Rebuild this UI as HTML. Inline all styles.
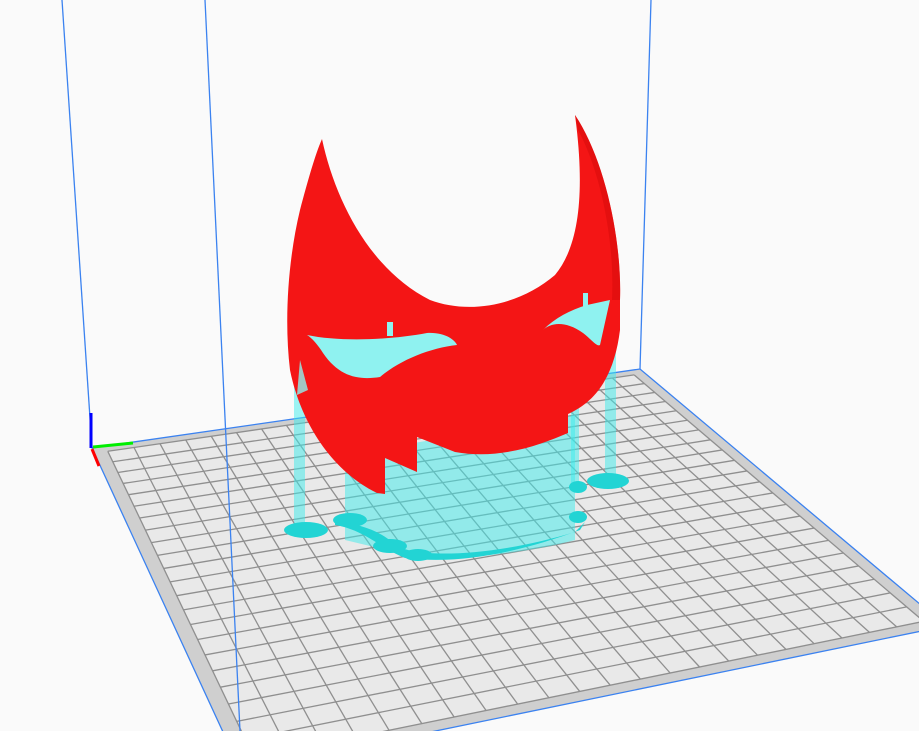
<!DOCTYPE html>
<html><head><meta charset="utf-8"><style>
html,body{margin:0;padding:0;background:#fafafa;overflow:hidden;width:919px;height:731px}
svg{display:block}
</style></head><body>
<svg id="s" width="919" height="731" viewBox="0 0 919 731" xmlns="http://www.w3.org/2000/svg">
<rect width="919" height="731" fill="#fafafa"/>
<g id="plate"></g>
<line x1="62" y1="0" x2="92" y2="448" stroke="#3b82f0" stroke-width="1.3"/>
<line x1="651" y1="0" x2="640" y2="369" stroke="#3b82f0" stroke-width="1.3"/>
<line x1="91" y1="413" x2="91" y2="448" stroke="#0000ff" stroke-width="3"/>
<line x1="93" y1="447" x2="133" y2="443" stroke="#00ee00" stroke-width="3"/>
<line x1="92" y1="449" x2="99" y2="466" stroke="#ff0000" stroke-width="3"/>
<g fill="rgba(60,235,235,0.5)">
<path d="M345,455 L575,415 L575,540 C540,550 470,560 420,558 L345,540 Z"/>
<rect x="294" y="345" width="11" height="185"/>
<rect x="605" y="300" width="11" height="180"/>
<rect x="571" y="390" width="8" height="95"/>
<path d="M305,330 L455,335 L430,360 L380,385 L320,360 Z"/>
<path d="M540,325 L612,290 L610,360 L590,350 Z"/>
</g>
<g fill="#22d4d4">
<ellipse cx="306" cy="530" rx="22" ry="8"/>
<ellipse cx="608" cy="481" rx="21" ry="8"/>
<ellipse cx="578" cy="487" rx="9" ry="6"/>
<ellipse cx="350" cy="520" rx="17" ry="7"/>
<ellipse cx="578" cy="517" rx="9" ry="6"/>
<ellipse cx="390" cy="546" rx="17" ry="7"/>
<ellipse cx="418" cy="555" rx="14" ry="6"/>
<path d="M335,520 C360,525 380,530 395,545 C420,560 500,555 575,532 L585,522 L580,530 C520,552 460,565 405,558 C380,548 365,530 335,525 Z"/>
</g>
<path fill="#f41515" d="M322,139 C335,200 370,270 430,300 C470,315 520,305 555,275 C580,245 585,190 575,115 C605,160 622,240 620,300 L620,330 C615,370 600,400 568,414 L568,433 C540,445 500,460 455,452 L417,437 L417,472 L385,458 L385,494 L377,493 C330,470 300,420 290,370 C284,320 288,260 300,210 C308,180 315,155 322,139 Z"/>
<path fill="#d80c0c" d="M575,115 C605,160 622,240 620,300 L612,300 C615,240 600,170 578,130 Z" opacity="0.6"/>
<path fill="#8ff2f0" d="M307,335 C340,342 390,340 427,333 C445,332 455,340 457,345 C430,348 400,360 380,377 C360,380 340,378 323,353 C318,345 312,338 307,335 Z"/>
<path fill="#8ff2f0" d="M543,330 C550,323 565,320 583,333 C592,340 597,347 600,345 L610,300 L587,305 C570,310 555,318 543,330 Z"/>
<rect x="387" y="322" width="6" height="14" fill="#8ff2f0"/>
<rect x="583" y="293" width="5" height="14" fill="#8ff2f0"/>
<path d="M300,360 L297,395 L308,390 Z" fill="#8ff2f0" opacity="0.8"/>
<line x1="205" y1="0" x2="240" y2="731" stroke="#3b82f0" stroke-width="1.3"/>
</svg>
<script>
(function(){
var A=[92,448],B=[640,369],C=[946,626],D=[241,771];
function H(){
 var x0=A[0],y0=A[1],x1=B[0],y1=B[1],x2=C[0],y2=C[1],x3=D[0],y3=D[1];
 var dx1=x1-x2,dx2=x3-x2,dy1=y1-y2,dy2=y3-y2,sx=x0-x1+x2-x3,sy=y0-y1+y2-y3;
 var den=dx1*dy2-dx2*dy1;
 var g=(sx*dy2-dx2*sy)/den,h=(dx1*sy-sx*dy1)/den;
 var a=x1-x0+g*x1,b=x3-x0+h*x3,c=x0,d=y1-y0+g*y1,e=y3-y0+h*y3,f=y0;
 return function(u,v){var w=g*u+h*v+1;return [(a*u+b*v+c)/w,(d*u+e*v+f)/w];};
}
var P=H();
var g=document.getElementById('plate');var ns='http://www.w3.org/2000/svg';
function poly(pts,fill,stroke,sw){var p=document.createElementNS(ns,'polygon');
 p.setAttribute('points',pts.map(function(q){return q[0].toFixed(1)+','+q[1].toFixed(1)}).join(' '));
 p.setAttribute('fill',fill);if(stroke){p.setAttribute('stroke',stroke);p.setAttribute('stroke-width',sw);}g.appendChild(p);}
poly([P(0,0),P(1,0),P(1,1),P(0,1)],'#cfcfcf','#3b82f0',1.3);
var m=0.022;
poly([P(m,m),P(1-m,m),P(1-m,1-m),P(m,1-m)],'#e9e9e9');
var N=22;
for(var i=0;i<=N;i++){
 var t=m+(1-2*m)*i/N;
 [[P(t,m),P(t,1-m)],[P(m,t),P(1-m,t)]].forEach(function(s){
  var l=document.createElementNS(ns,'line');
  l.setAttribute('x1',s[0][0]);l.setAttribute('y1',s[0][1]);l.setAttribute('x2',s[1][0]);l.setAttribute('y2',s[1][1]);
  l.setAttribute('stroke','#8f8f8f');l.setAttribute('stroke-width','1.3');g.appendChild(l);});
}
})();
</script>
</body></html>
